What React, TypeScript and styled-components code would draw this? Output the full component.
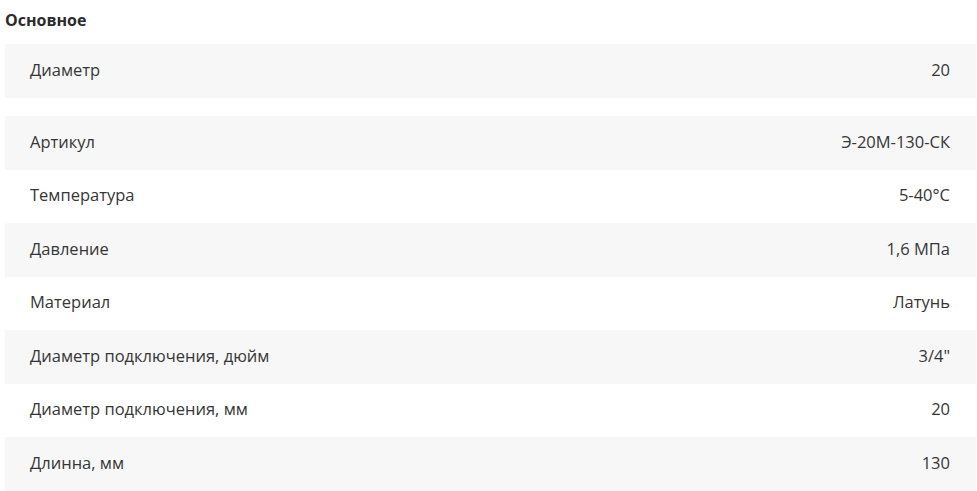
import React from "react";
import styled, { createGlobalStyle } from "styled-components";

const Global = createGlobalStyle`
  html, body { margin: 0; padding: 0; background: #fff; }
  body { font-family: "Open Sans", "Noto Sans", sans-serif; color: #333; overflow: hidden; }
`;

const Page = styled.div`
  padding: 8px 1px 0 5px;
`;

const Title = styled.h3`
  margin: 0;
  font-size: 16px;
  line-height: 24px;
  font-weight: 700;
  color: #2b2b2b;
`;

const Group = styled.div<{ $first?: boolean }>`
  margin-top: ${(p) => (p.$first ? "12px" : "18.5px")};
  display: flex;
  flex-direction: column;
`;

const Row = styled.div<{ $shaded: boolean }>`
  height: 53.5px;
  box-sizing: border-box;
  display: flex;
  align-items: center;
  justify-content: space-between;
  padding: 0 26px 3px 25px;
  background: ${(p) => (p.$shaded ? "#f7f7f7" : "#fff")};
  font-size: 16.5px;
  color: #363636;
`;

const Label = styled.span``;
const Value = styled.span``;

const main = [{ k: "Диаметр", v: "20" }];
const rest = [
  { k: "Артикул", v: "Э-20М-130-СК" },
  { k: "Температура", v: "5-40°C" },
  { k: "Давление", v: "1,6 МПа" },
  { k: "Материал", v: "Латунь" },
  { k: "Диаметр подключения, дюйм", v: "3/4\"" },
  { k: "Диаметр подключения, мм", v: "20" },
  { k: "Длинна, мм", v: "130" },
];

export default function App() {
  return (
    <Page>
      <Global />
      <Title>Основное</Title>
      <Group $first>
        {main.map((r) => (
          <Row key={r.k} $shaded>
            <Label>{r.k}</Label>
            <Value>{r.v}</Value>
          </Row>
        ))}
      </Group>
      <Group>
        {rest.map((r, i) => (
          <Row key={r.k} $shaded={i % 2 === 0}>
            <Label>{r.k}</Label>
            <Value>{r.v}</Value>
          </Row>
        ))}
      </Group>
    </Page>
  );
}
